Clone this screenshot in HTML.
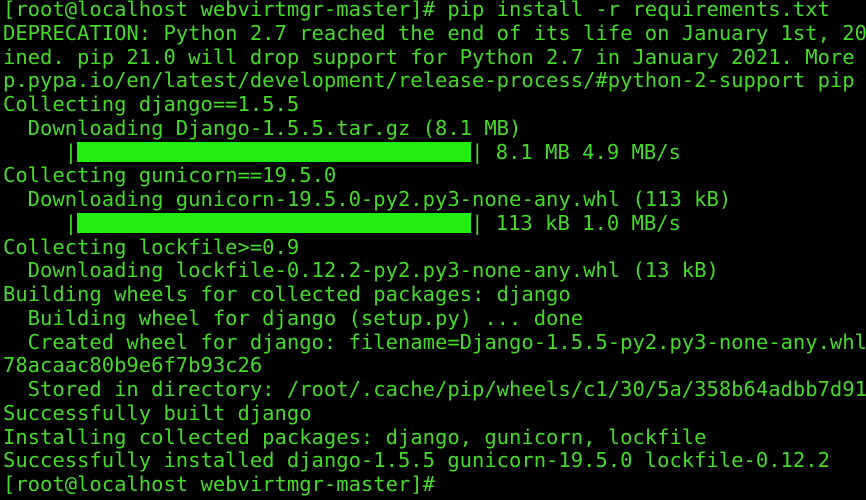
<!DOCTYPE html>
<html><head><meta charset="utf-8"><style>
html,body{margin:0;padding:0;background:#000;width:866px;height:500px;overflow:hidden}
pre{margin:0;position:absolute;left:3px;top:-2px;font-family:"DejaVu Sans Mono","Liberation Mono",monospace;font-size:20.5px;line-height:23.75px;color:#46d92a;white-space:pre}
.bar{display:inline-block;width:394px;height:20px;background:#22ee11;vertical-align:-3px}
</style></head><body>
<pre>[root@localhost webvirtmgr-master]# pip install -r requirements.txt
DEPRECATION: Python 2.7 reached the end of its life on January 1st, 20
ined. pip 21.0 will drop support for Python 2.7 in January 2021. More
p.pypa.io/en/latest/development/release-process/#python-2-support pip
Collecting django==1.5.5
  Downloading Django-1.5.5.tar.gz (8.1 MB)
     |<span class="bar"></span>| 8.1 MB 4.9 MB/s
Collecting gunicorn==19.5.0
  Downloading gunicorn-19.5.0-py2.py3-none-any.whl (113 kB)
     |<span class="bar"></span>| 113 kB 1.0 MB/s
Collecting lockfile>=0.9
  Downloading lockfile-0.12.2-py2.py3-none-any.whl (13 kB)
Building wheels for collected packages: django
  Building wheel for django (setup.py) ... done
  Created wheel for django: filename=Django-1.5.5-py2.py3-none-any.whl
78acaac80b9e6f7b93c26
  Stored in directory: /root/.cache/pip/wheels/c1/30/5a/358b64adbb7d91
Successfully built django
Installing collected packages: django, gunicorn, lockfile
Successfully installed django-1.5.5 gunicorn-19.5.0 lockfile-0.12.2
[root@localhost webvirtmgr-master]# </pre>
</body></html>
